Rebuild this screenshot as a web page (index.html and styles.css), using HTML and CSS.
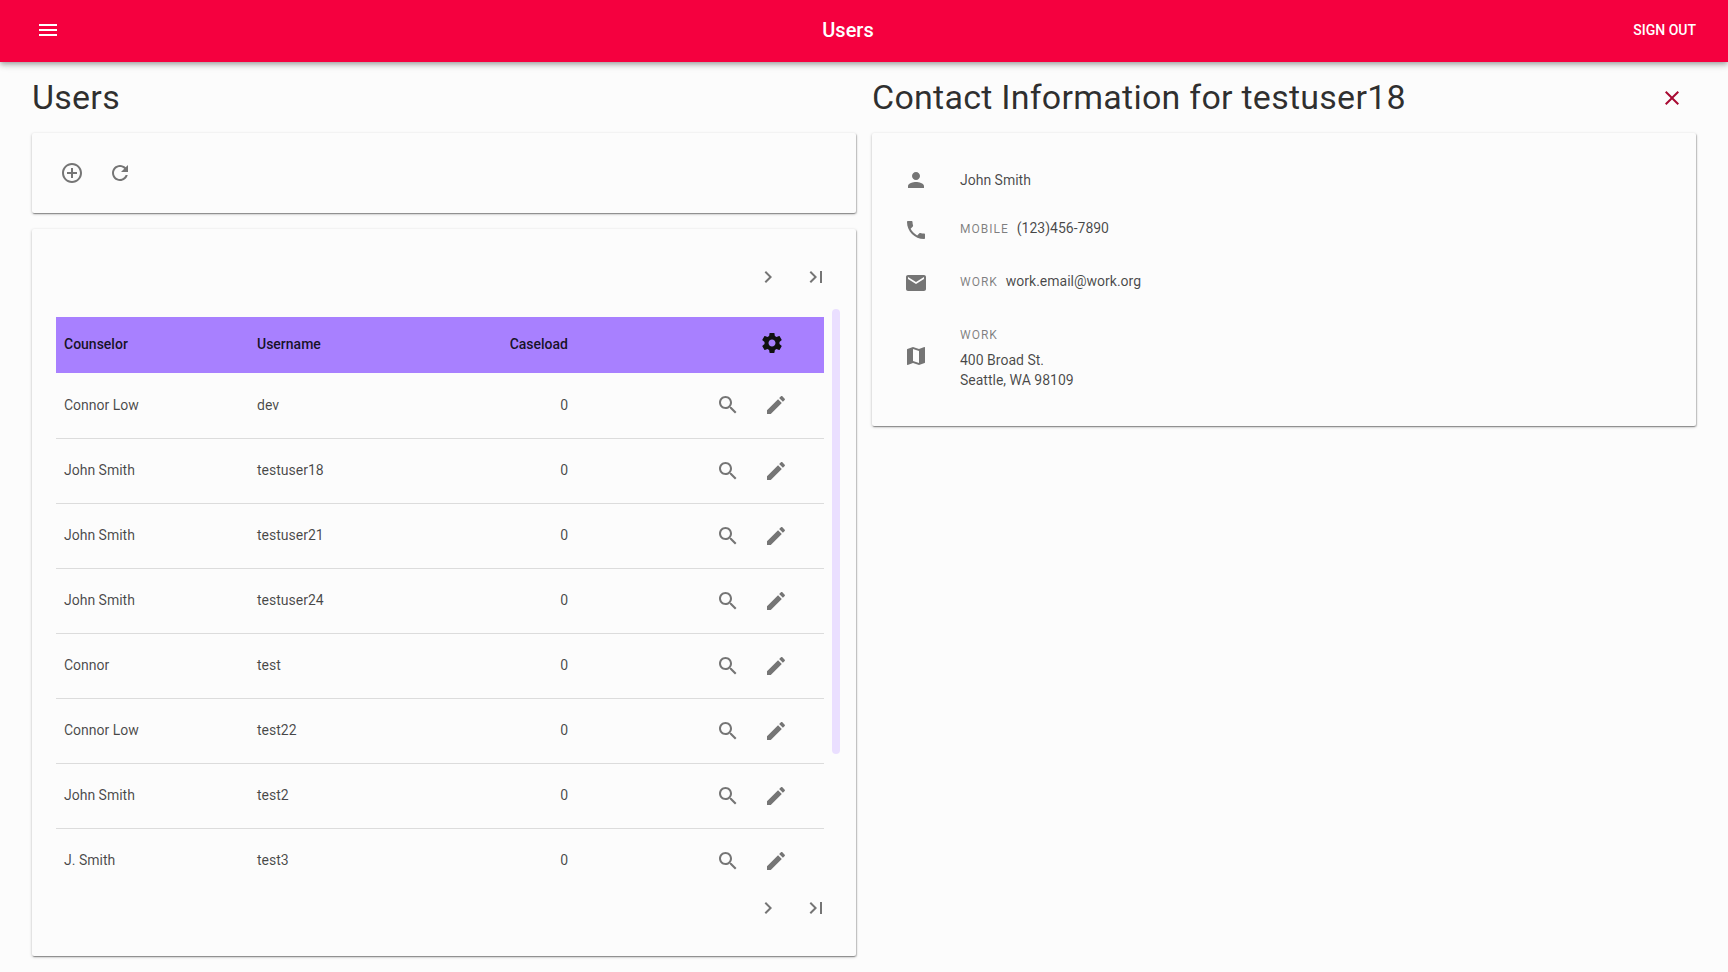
FILE: index.html
```html
<!doctype html>
<html lang="en">
  <head>
    <meta charset="UTF-8" />
    <meta name="viewport" content="width=device-width, initial-scale=1.0" />
    <title>Users</title>
    <link rel="stylesheet" href="styles.css">
  </head>
  <body>
    <svg class="sprites" aria-hidden="true">
      <symbol id="i-menu" viewBox="0 0 24 24"><path d="M3 18h18v-2H3v2zm0-5h18v-2H3v2zm0-7v2h18V6H3z"/></symbol>
      <symbol id="i-add" viewBox="0 0 24 24"><path d="M13 7h-2v4H7v2h4v4h2v-4h4v-2h-4V7zm-1-5C6.48 2 2 6.48 2 12s4.48 10 10 10 10-4.48 10-10S17.52 2 12 2zm0 18c-4.41 0-8-3.59-8-8s3.59-8 8-8 8 3.59 8 8-3.59 8-8 8z"/></symbol>
      <symbol id="i-refresh" viewBox="0 0 24 24"><path d="M17.65 6.35C16.2 4.9 14.21 4 12 4c-4.42 0-7.99 3.58-7.99 8s3.57 8 7.99 8c3.73 0 6.84-2.55 7.73-6h-2.08c-.82 2.33-3.04 4-5.65 4-3.31 0-6-2.69-6-6s2.69-6 6-6c1.66 0 3.14.69 4.22 1.78L13 11h7V4l-2.35 2.35z"/></symbol>
      <symbol id="i-next" viewBox="0 0 24 24"><path d="M10 6L8.59 7.41 13.17 12l-4.58 4.59L10 18l6-6z"/></symbol>
      <symbol id="i-last" viewBox="0 0 24 24"><path d="M5.59 7.41L10.18 12l-4.59 4.59L7 18l6-6-6-6zM16 6h2v12h-2z"/></symbol>
      <symbol id="i-settings" viewBox="0 0 24 24"><path d="M19.43 12.98c.04-.32.07-.64.07-.98s-.03-.66-.07-.98l2.11-1.65c.19-.15.24-.42.12-.64l-2-3.46c-.12-.22-.39-.3-.61-.22l-2.49 1c-.52-.4-1.08-.73-1.69-.98l-.38-2.65C14.46 2.18 14.25 2 14 2h-4c-.25 0-.46.18-.49.42l-.38 2.65c-.61.25-1.17.59-1.69.98l-2.49-1c-.23-.09-.49 0-.61.22l-2 3.46c-.13.22-.07.49.12.64l2.11 1.65c-.04.32-.07.65-.07.98s.03.66.07.98l-2.11 1.65c-.19.15-.24.42-.12.64l2 3.46c.12.22.39.3.61.22l2.49-1c.52.4 1.08.73 1.69.98l.38 2.65c.03.24.24.42.49.42h4c.25 0 .46-.18.49-.42l.38-2.65c.61-.25 1.17-.59 1.69-.98l2.49 1c.23.09.49 0 .61-.22l2-3.46c.12-.22.07-.49-.12-.64l-2.11-1.65zM12 15.5c-1.93 0-3.5-1.57-3.5-3.5s1.57-3.5 3.5-3.5 3.5 1.57 3.5 3.5-1.57 3.5-3.5 3.5z"/></symbol>
      <symbol id="i-search" viewBox="0 0 24 24"><path d="M15.5 14h-.79l-.28-.27C15.41 12.59 16 11.11 16 9.5 16 5.91 13.09 3 9.5 3S3 5.91 3 9.5 5.91 16 9.5 16c1.61 0 3.09-.59 4.23-1.57l.27.28v.79l5 4.99L20.49 19l-4.99-5zm-6 0C7.01 14 5 11.99 5 9.5S7.01 5 9.5 5 14 7.01 14 9.5 11.99 14 9.5 14z"/></symbol>
      <symbol id="i-edit" viewBox="0 0 24 24"><path d="M3 17.25V21h3.75L17.81 9.94l-3.75-3.75L3 17.25zM20.71 7.04c.39-.39.39-1.02 0-1.41l-2.34-2.34c-.39-.39-1.02-.39-1.41 0l-1.83 1.83 3.75 3.75 1.83-1.83z"/></symbol>
      <symbol id="i-person" viewBox="0 0 24 24"><path d="M12 12c2.21 0 4-1.79 4-4s-1.79-4-4-4-4 1.79-4 4 1.79 4 4 4zm0 2c-2.67 0-8 1.34-8 4v2h16v-2c0-2.66-5.33-4-8-4z"/></symbol>
      <symbol id="i-phone" viewBox="0 0 24 24"><path d="M6.62 10.79c1.44 2.83 3.76 5.14 6.59 6.59l2.2-2.2c.27-.27.67-.36 1.02-.24 1.12.37 2.33.57 3.57.57.55 0 1 .45 1 1V20c0 .55-.45 1-1 1-9.39 0-17-7.61-17-17 0-.55.45-1 1-1h3.5c.55 0 1 .45 1 1 0 1.25.2 2.45.57 3.57.11.35.03.74-.25 1.02l-2.2 2.2z"/></symbol>
      <symbol id="i-email" viewBox="0 0 24 24"><path d="M20 4H4c-1.1 0-1.99.9-1.99 2L2 18c0 1.1.9 2 2 2h16c1.1 0 2-.9 2-2V6c0-1.1-.9-2-2-2zm0 4l-8 5-8-5V6l8 5 8-5v2z"/></symbol>
      <symbol id="i-map" viewBox="0 0 24 24"><path d="M20.5 3l-.16.03L15 5.1 9 3 3.36 4.9c-.21.07-.36.25-.36.48V20.5c0 .28.22.5.5.5l.16-.03L9 18.9l6 2.1 5.64-1.9c.21-.07.36-.25.36-.48V3.5c0-.28-.22-.5-.5-.5zM15 19l-6-2.11V5l6 2.11V19z"/></symbol>
      <symbol id="i-close" viewBox="0 0 24 24"><path d="M19 6.41L17.59 5 12 10.59 6.41 5 5 6.41 10.59 12 5 17.59 6.41 19 12 13.41 17.59 19 19 17.59 13.41 12z"/></symbol>
    </svg>

    <header class="topbar">
      <button class="icon-btn menu-btn"><svg class="icon"><use href="#i-menu"/></svg></button>
      <div class="topbar-title">Users</div>
      <button class="signout">Sign out</button>
    </header>

    <main class="layout">
      <section class="column">
        <div class="heading-row">
          <h1>Users</h1>
        </div>

        <div class="card actions-card">
          <button class="icon-btn"><svg class="icon"><use href="#i-add"/></svg></button>
          <button class="icon-btn"><svg class="icon"><use href="#i-refresh"/></svg></button>
        </div>

        <div class="card table-card">
          <div class="pager">
            <button class="icon-btn"><svg class="icon"><use href="#i-next"/></svg></button>
            <button class="icon-btn"><svg class="icon"><use href="#i-last"/></svg></button>
          </div>

          <div class="table-scroll">
            <table>
              <colgroup>
                <col class="col-name" />
                <col class="col-username" />
                <col class="col-caseload" />
                <col />
              </colgroup>
              <thead>
                <tr>
                  <th>Counselor</th>
                  <th>Username</th>
                  <th class="num">Caseload</th>
                  <th class="row-actions"><button class="icon-btn gear-btn"><svg class="icon"><use href="#i-settings"/></svg></button></th>
                </tr>
              </thead>
              <tbody>
                <tr>
                  <td>Connor Low</td><td>dev</td><td class="num">0</td>
                  <td class="row-actions"><button class="icon-btn"><svg class="icon"><use href="#i-search"/></svg></button><button class="icon-btn"><svg class="icon"><use href="#i-edit"/></svg></button></td>
                </tr>
                <tr>
                  <td>John Smith</td><td>testuser18</td><td class="num">0</td>
                  <td class="row-actions"><button class="icon-btn"><svg class="icon"><use href="#i-search"/></svg></button><button class="icon-btn"><svg class="icon"><use href="#i-edit"/></svg></button></td>
                </tr>
                <tr>
                  <td>John Smith</td><td>testuser21</td><td class="num">0</td>
                  <td class="row-actions"><button class="icon-btn"><svg class="icon"><use href="#i-search"/></svg></button><button class="icon-btn"><svg class="icon"><use href="#i-edit"/></svg></button></td>
                </tr>
                <tr>
                  <td>John Smith</td><td>testuser24</td><td class="num">0</td>
                  <td class="row-actions"><button class="icon-btn"><svg class="icon"><use href="#i-search"/></svg></button><button class="icon-btn"><svg class="icon"><use href="#i-edit"/></svg></button></td>
                </tr>
                <tr>
                  <td>Connor</td><td>test</td><td class="num">0</td>
                  <td class="row-actions"><button class="icon-btn"><svg class="icon"><use href="#i-search"/></svg></button><button class="icon-btn"><svg class="icon"><use href="#i-edit"/></svg></button></td>
                </tr>
                <tr>
                  <td>Connor Low</td><td>test22</td><td class="num">0</td>
                  <td class="row-actions"><button class="icon-btn"><svg class="icon"><use href="#i-search"/></svg></button><button class="icon-btn"><svg class="icon"><use href="#i-edit"/></svg></button></td>
                </tr>
                <tr>
                  <td>John Smith</td><td>test2</td><td class="num">0</td>
                  <td class="row-actions"><button class="icon-btn"><svg class="icon"><use href="#i-search"/></svg></button><button class="icon-btn"><svg class="icon"><use href="#i-edit"/></svg></button></td>
                </tr>
                <tr>
                  <td>J. Smith</td><td>test3</td><td class="num">0</td>
                  <td class="row-actions"><button class="icon-btn"><svg class="icon"><use href="#i-search"/></svg></button><button class="icon-btn"><svg class="icon"><use href="#i-edit"/></svg></button></td>
                </tr>
              </tbody>
            </table>
            <div class="scroll-thumb"></div>
          </div>

          <div class="pager">
            <button class="icon-btn"><svg class="icon"><use href="#i-next"/></svg></button>
            <button class="icon-btn"><svg class="icon"><use href="#i-last"/></svg></button>
          </div>
        </div>
      </section>

      <section class="column">
        <div class="heading-row">
          <h1>Contact Information for testuser18</h1>
          <button class="icon-btn close-btn"><svg class="icon"><use href="#i-close"/></svg></button>
        </div>

        <div class="card contact-card">
          <div class="contact-row row-name">
            <svg class="icon"><use href="#i-person"/></svg>
            <div class="contact-text">John Smith</div>
          </div>
          <div class="contact-row row-phone">
            <svg class="icon"><use href="#i-phone"/></svg>
            <div class="contact-text lifted"><span class="tag">Mobile</span>(123)456-7890</div>
          </div>
          <div class="contact-row row-email">
            <svg class="icon"><use href="#i-email"/></svg>
            <div class="contact-text lifted"><span class="tag">Work</span>work.email@work.org</div>
          </div>
          <div class="contact-row row-address">
            <svg class="icon"><use href="#i-map"/></svg>
            <div class="contact-text address">
              <div class="tag tag-block">Work</div>
              <div>400 Broad St.</div>
              <div>Seattle, WA 98109</div>
            </div>
          </div>
        </div>
      </section>
    </main>
  </body>
</html>
```

FILE: styles.css
```css
* {
  box-sizing: border-box;
}

body {
  margin: 0;
  min-height: 100vh;
  background-color: #fcfcfc;
  color: rgba(0, 0, 0, 0.87);
  font-family: Roboto, sans-serif;
  font-size: 14px;
}

button {
  border: none;
  background: none;
  padding: 0;
  font-family: inherit;
  cursor: pointer;
}

.sprites {
  display: none;
}

.icon {
  display: block;
  flex: none;
  width: 24px;
  height: 24px;
  fill: #757575;
}

.icon-btn {
  display: flex;
  flex: none;
  align-items: center;
  justify-content: center;
  width: 48px;
  height: 48px;
}

.topbar {
  display: flex;
  align-items: center;
  height: 62px;
  padding: 0 32px 2px 24px;
  background-color: #f5003f;
  box-shadow: 0 2px 4px -1px rgba(0, 0, 0, 0.2), 0 4px 5px rgba(0, 0, 0, 0.14), 0 1px 10px rgba(0, 0, 0, 0.12);
  position: relative;
}

.topbar .icon {
  fill: #fff;
}

.topbar-title {
  flex: 1;
  padding-right: 8px;
  color: #fff;
  font-size: 20px;
  font-weight: 500;
  text-align: center;
}

.signout {
  width: 64px;
  color: #fff;
  font-size: 14px;
  font-weight: 500;
  text-align: right;
  text-transform: uppercase;
  white-space: nowrap;
}

.layout {
  display: grid;
  grid-template-columns: 1fr 1fr;
  gap: 16px;
  padding: 0 32px;
}

.heading-row {
  display: flex;
  align-items: center;
  justify-content: space-between;
  height: 71px;
}

h1 {
  margin: 0 0 1px;
  color: rgba(0, 0, 0, 0.82);
  font-size: 34px;
  font-weight: 400;
  letter-spacing: 0.25px;
  line-height: 40px;
}

.close-btn .icon {
  fill: #a80a32;
}

.card {
  background-color: #fcfcfc;
  border-radius: 2px;
  box-shadow: 0 1px 3px rgba(0, 0, 0, 0.28), 1px 1px 1px rgba(0, 0, 0, 0.16), 0 2px 1px -1px rgba(0, 0, 0, 0.2);
}

.actions-card {
  display: flex;
  height: 80px;
  padding: 16px;
  margin-bottom: 16px;
}

.table-card {
  height: 727px;
  padding: 24px 16px 24px 24px;
}

.pager {
  display: flex;
  justify-content: flex-end;
}

.table-scroll {
  height: 583px;
  padding-top: 16px;
  overflow: hidden;
  position: relative;
}

table {
  width: 768px;
  border-collapse: collapse;
  table-layout: fixed;
}

.col-name {
  width: 193px;
}

.col-username {
  width: 180px;
}

.col-caseload {
  width: 147px;
}

th,
td {
  padding: 0 8px 1px;
  text-align: left;
}

th {
  height: 56px;
  padding-bottom: 2px;
  background-color: #a880ff;
  font-weight: 500;
}

td {
  height: 65px;
  border-bottom: 1px solid #dcdcdc;
  color: rgba(0, 0, 0, 0.72);
}

th.num,
td.num {
  text-align: right;
}

td.row-actions {
  padding: 0 24px 0 0;
  text-align: right;
  white-space: nowrap;
  font-size: 0;
}

.row-actions > .icon-btn {
  display: inline-flex;
}

th.row-actions {
  padding: 0 28px 5px 0;
  text-align: right;
}

.gear-btn .icon {
  fill: #111;
}

.scroll-thumb {
  position: absolute;
  top: 8px;
  right: 0;
  width: 8px;
  height: 445px;
  border-radius: 4px;
  background-color: #eadfff;
}

.contact-card {
  height: 293px;
  padding: 23px 32px 0;
}

.contact-row {
  display: flex;
  align-items: center;
  gap: 32px;
  height: 48px;
}

.row-phone {
  margin-top: 2px;
}

.row-email {
  margin-top: 5px;
}

.row-address {
  height: 72px;
  margin-top: 13px;
}

.contact-text {
  color: rgba(0, 0, 0, 0.72);
  line-height: 20px;
}

.address {
  padding-top: 2px;
}

.lifted {
  margin-bottom: 4px;
}

.tag {
  margin-right: 8px;
  color: rgba(0, 0, 0, 0.5);
  font-size: 12px;
  letter-spacing: 1px;
  text-transform: uppercase;
}

.tag-block {
  margin-bottom: 5px;
  margin-right: 0;
}
```
